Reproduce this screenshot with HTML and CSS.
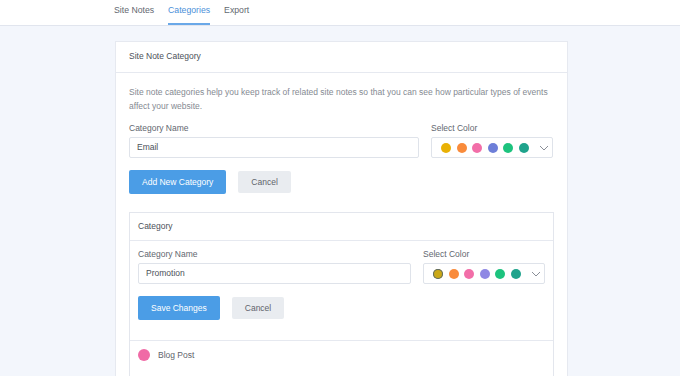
FILE: index.html
```html
<!DOCTYPE html>
<html>
<head>
<meta charset="utf-8">
<link rel="stylesheet" href="styles.css">
</head>
<body>
<nav class="topnav">
  <div class="tabs">
    <a class="tab">Site Notes</a>
    <a class="tab active">Categories</a>
    <a class="tab">Export</a>
  </div>
</nav>
<main class="main">
  <section class="card">
    <header class="card-head">Site Note Category</header>
    <div class="card-body">
      <p class="desc">Site note categories help you keep track of related site notes so that you can see how particular types of events affect your website.</p>
      <div class="form-row">
        <div class="field name">
          <label class="label">Category Name</label>
          <div class="input">Email</div>
        </div>
        <div class="field color">
          <label class="label">Select Color</label>
          <div class="select">
            <span class="dot c1"></span><span class="dot c2"></span><span class="dot c3"></span><span class="dot c4"></span><span class="dot c5"></span><span class="dot c6"></span>
            <svg class="chev" width="10" height="6" viewBox="0 0 10 6"><path d="M1 1l4 4 4-4" fill="none" stroke="#8a8f98" stroke-width="1"/></svg>
          </div>
        </div>
      </div>
      <div class="actions">
        <button class="btn primary">Add New Category</button>
        <button class="btn secondary">Cancel</button>
      </div>

      <section class="inner">
        <header class="inner-head">Category</header>
        <div class="inner-body">
          <div class="form-row">
            <div class="field name">
              <label class="label">Category Name</label>
              <div class="input">Promotion</div>
            </div>
            <div class="field color">
              <label class="label">Select Color</label>
              <div class="select">
                <span class="dot c1b sel"></span><span class="dot c2"></span><span class="dot c3"></span><span class="dot c4b"></span><span class="dot c5"></span><span class="dot c6"></span>
                <svg class="chev" width="10" height="6" viewBox="0 0 10 6"><path d="M1 1l4 4 4-4" fill="none" stroke="#8a8f98" stroke-width="1"/></svg>
              </div>
            </div>
          </div>
          <div class="actions">
            <button class="btn primary">Save Changes</button>
            <button class="btn secondary">Cancel</button>
          </div>
        </div>
        <div class="item">
          <span class="item-dot"></span>
          <span class="item-name">Blog Post</span>
        </div>
        <div class="item"></div>
      </section>
    </div>
  </section>
</main>
</body>
</html>
```

FILE: styles.css
```css
* { box-sizing: border-box; }
html, body { margin: 0; padding: 0; }
body {
  background: #f3f6fc;
  font-family: "Liberation Sans", Arial, sans-serif;
  font-size: 8.5px;
  color: #5f646c;
  width: 680px;
  height: 376px;
  overflow: hidden;
}
.topnav {
  background: #fff;
  height: 26px;
  border-bottom: 1px solid #e1e5ee;
}
.tabs {
  width: 453px;
  margin-left: 114px;
  display: flex;
  gap: 14px;
  height: 25px;
}
.tab {
  display: block;
  height: 25px;
  line-height: 21px;
  font-size: 8.7px;
  color: #62676f;
  border-bottom: 2px solid transparent;
}
.tab.active {
  color: #4a90d9;
  border-bottom-color: #6aa8e8;
}
.main {
  padding: 15px 0 0 115px;
}
.card {
  width: 453px;
  background: #fff;
  border: 1px solid #e6e9f0;
  border-bottom: none;
  height: 400px;
}
.card-head {
  height: 31px;
  line-height: 29px;
  padding: 0 13px;
  color: #4c5159;
  border-bottom: 1px solid #e6e9f0;
}
.card-body {
  padding: 12px 14px 0 13px;
}
.desc {
  margin: 0;
  line-height: 14px;
  color: #858a92;
}
.form-row {
  display: flex;
  gap: 12px;
  margin-top: 8px;
}
.field.name { flex: 1; }
.field.color { width: 122px; }
.label {
  display: block;
  line-height: 14px;
  color: #62676f;
  margin-bottom: 2px;
}
.input {
  height: 21px;
  border: 1px solid #dfe3ea;
  border-radius: 2px;
  padding: 0 7px;
  line-height: 19px;
  color: #4c5159;
  background: #fff;
}
.select {
  height: 21px;
  border: 1px solid #dfe3ea;
  border-radius: 2px;
  display: flex;
  align-items: center;
  padding-left: 9px;
  gap: 5.6px;
  background: #fff;
}
.dot {
  width: 10px;
  height: 10px;
  border-radius: 50%;
  display: block;
  flex: none;
}
.c1 { background: #e9b105; }
.c1b { background: #caa816; }
.c2 { background: #f98b3b; }
.c3 { background: #f26ea8; }
.c4 { background: #6d7ed8; }
.c4b { background: #8f88e4; }
.c5 { background: #1dc37e; }
.c6 { background: #1fa38c; }
.sel { box-shadow: inset 0 0 0 1px #5b6a6a; }
.chev { margin-left: 4px; }
.actions {
  display: flex;
  align-items: center;
  gap: 12px;
  margin-top: 12px;
}
.btn {
  font-family: inherit;
  font-size: 8.5px;
  border: none;
  border-radius: 2px;
}
.btn.primary {
  background: #4b9de6;
  color: #fff;
  height: 24px;
  padding: 0 13px;
}
.btn.secondary {
  background: #e9ecf0;
  color: #5f646c;
  height: 22px;
  padding: 0 13px;
}
.inner {
  margin-top: 18px;
  border: 1px solid #e3e6ed;
  width: 425px;
}
.inner-head {
  height: 28px;
  line-height: 27px;
  padding: 0 8px;
  color: #4c5159;
  border-bottom: 1px solid #e6e9f0;
}
.inner-body {
  padding: 6px 8px 20px 8px;
  border-bottom: 1px solid #e6e9f0;
}
.inner-body .form-row { margin-top: 0; }
.item {
  height: 28px;
  display: flex;
  align-items: center;
  padding-left: 8px;
  gap: 8px;
  color: #5f646c;
}
.item-dot {
  width: 12px;
  height: 12px;
  border-radius: 50%;
  background: #f06aa6;
}
```
